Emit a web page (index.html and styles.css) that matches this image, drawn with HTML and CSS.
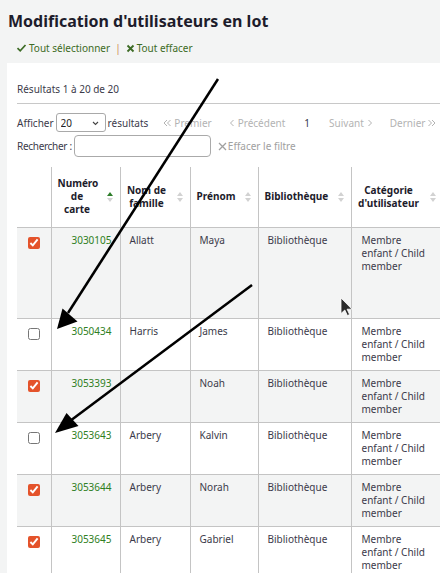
FILE: index.html
```html
<!DOCTYPE html>
<html lang="fr">
  <head>
    <meta charset="UTF-8" />
    <meta name="viewport" content="width=device-width, initial-scale=1.0" />
    <title>Modification d'utilisateurs en lot</title>
    <link rel="stylesheet" href="styles.css">
  </head>
  <body>
    <h1 class="page-title">Modification d'utilisateurs en lot</h1>

    <div class="toolbar">
      <a class="tool" href="#">
        <svg width="11" height="10" viewBox="0 0 11 10"><path d="M1.5 5.2 L4.2 7.8 L9.5 2" fill="none" stroke="currentColor" stroke-width="1.7"/></svg>
        Tout sélectionner
      </a>
      <span class="sep">|</span>
      <a class="tool" href="#">
        <svg width="9" height="10" viewBox="0 0 9 10"><path d="M1.5 2.5 L7.5 8.5 M7.5 2.5 L1.5 8.5" fill="none" stroke="currentColor" stroke-width="1.8"/></svg>
        Tout effacer
      </a>
    </div>

    <div class="panel">
      <p class="info">Résultats 1 à 20 de 20</p>

      <div class="controls">
        <div class="ctrl-row">
          <label class="length">
            Afficher
            <span class="select-wrap">
              <select>
                <option>20</option>
                <option>50</option>
                <option>100</option>
              </select>
              <svg class="chev" width="7" height="5" viewBox="0 0 7 5"><path d="M1 1 L3.5 3.5 L6 1" fill="none" stroke="#444" stroke-width="1.1"/></svg>
            </span>
            résultats
          </label>
          <div class="pager">
            <span class="page off">
              <svg width="8" height="8" viewBox="0 0 8 8"><path d="M4 1 L1 4 L4 7 M7.5 1 L4.5 4 L7.5 7" fill="none" stroke="currentColor" stroke-width="1"/></svg>Premier
            </span>
            <span class="page off">
              <svg width="6" height="8" viewBox="0 0 6 8"><path d="M4.5 1 L1.5 4 L4.5 7" fill="none" stroke="currentColor" stroke-width="1"/></svg>
              Précédent
            </span>
            <span class="page current">1</span>
            <span class="page off">
              Suivant
              <svg width="6" height="8" viewBox="0 0 6 8"><path d="M1.5 1 L4.5 4 L1.5 7" fill="none" stroke="currentColor" stroke-width="1"/></svg>
            </span>
            <span class="page off">
              Dernier
              <svg width="8" height="8" viewBox="0 0 8 8"><path d="M0.5 1 L3.5 4 L0.5 7 M4 1 L7 4 L4 7" fill="none" stroke="currentColor" stroke-width="1"/></svg>
            </span>
          </div>
        </div>
        <div class="ctrl-row">
          <label class="filter">
            Rechercher :
            <input type="search" class="search" />
          </label>
          <a class="clear" href="#">
            <svg width="9" height="9" viewBox="0 0 9 9"><path d="M1 1 L8 8 M8 1 L1 8" fill="none" stroke="currentColor" stroke-width="1.3"/></svg>Effacer le filtre
          </a>
        </div>
      </div>

      <table class="patrons">
        <colgroup>
          <col class="c-check" />
          <col class="c-num" />
          <col class="c-name" />
          <col class="c-first" />
          <col class="c-lib" />
          <col class="c-cat" />
          <col class="c-city" />
          <col class="c-exp" />
        </colgroup>
        <thead>
          <tr>
            <th class="nosort"></th>
            <th>Numéro de carte<span class="sort asc"></span></th>
            <th>Nom de famille<span class="sort"></span></th>
            <th>Prénom<span class="sort"></span></th>
            <th>Bibliothèque<span class="sort"></span></th>
            <th>Catégorie d'utilisateur<span class="sort"></span></th>
            <th>Ville<span class="sort"></span></th>
            <th>Date d'expiration<span class="sort"></span></th>
          </tr>
        </thead>
        <tbody>
          <tr class="odd tall">
            <td class="check"><input type="checkbox" checked /></td>
            <td class="num"><a href="#">3030105</a></td>
            <td>Allatt</td>
            <td>Maya</td>
            <td>Bibliothèque</td>
            <td class="cat">Membre enfant / Child member</td>
            <td></td>
            <td>31/12/2099</td>
          </tr>
          <tr>
            <td class="check"><input type="checkbox" /></td>
            <td class="num"><a href="#">3050434</a></td>
            <td>Harris</td>
            <td>James</td>
            <td>Bibliothèque</td>
            <td class="cat">Membre enfant / Child member</td>
            <td></td>
            <td>31/12/2099</td>
          </tr>
          <tr class="odd">
            <td class="check"><input type="checkbox" checked /></td>
            <td class="num"><a href="#">3053393</a></td>
            <td></td>
            <td>Noah</td>
            <td>Bibliothèque</td>
            <td class="cat">Membre enfant / Child member</td>
            <td></td>
            <td>31/12/2099</td>
          </tr>
          <tr>
            <td class="check"><input type="checkbox" /></td>
            <td class="num"><a href="#">3053643</a></td>
            <td>Arbery</td>
            <td>Kalvin</td>
            <td>Bibliothèque</td>
            <td class="cat">Membre enfant / Child member</td>
            <td></td>
            <td>31/12/2099</td>
          </tr>
          <tr class="odd">
            <td class="check"><input type="checkbox" checked /></td>
            <td class="num"><a href="#">3053644</a></td>
            <td>Arbery</td>
            <td>Norah</td>
            <td>Bibliothèque</td>
            <td class="cat">Membre enfant / Child member</td>
            <td></td>
            <td>31/12/2099</td>
          </tr>
          <tr>
            <td class="check"><input type="checkbox" checked /></td>
            <td class="num"><a href="#">3053645</a></td>
            <td>Arbery</td>
            <td>Gabriel</td>
            <td>Bibliothèque</td>
            <td class="cat">Membre enfant / Child member</td>
            <td></td>
            <td>31/12/2099</td>
          </tr>
          <tr class="odd">
            <td class="check"><input type="checkbox" checked /></td>
            <td class="num"><a href="#">3053646</a></td>
            <td>Arbery</td>
            <td>Lily</td>
            <td>Bibliothèque</td>
            <td class="cat">Membre enfant / Child member</td>
            <td></td>
            <td>31/12/2099</td>
          </tr>
        </tbody>
      </table>
    </div>

    <!-- annotation arrows and mouse pointer drawn over the screenshot -->
    <svg class="annotations" width="440" height="573" viewBox="0 0 440 573">
      <line x1="218" y1="79" x2="68" y2="313" stroke="#000" stroke-width="2.5" />
      <polygon points="57,329 62.5,308.5 77.5,321.5" fill="#000" />
      <line x1="252" y1="285" x2="70" y2="421" stroke="#000" stroke-width="2.5" />
      <polygon points="55,433 66.5,413 78.5,426" fill="#000" />
      <path transform="translate(341 298)" d="M0 0 V15.5 L3.8 12 L6.4 17.5 L8.6 16.6 L6.1 11.2 H11 Z" fill="#2b2b2b" stroke="#fff" stroke-width="0.8" />
    </svg>
  </body>
</html>
```

FILE: styles.css
```css
html,
body {
  overflow: hidden;
}
body {
  margin: 0;
  background-color: #f3f4f4;
  font-family: "Noto Sans", "DejaVu Sans", sans-serif;
  font-size: 10px;
  color: #3b3a4a;
}
a {
  text-decoration: none;
}
.page-title {
  margin: 0;
  padding: 10px 8px 0;
  font-size: 16px;
  line-height: 22px;
  font-weight: bold;
  color: #1d1c2b;
  white-space: nowrap;
}
.toolbar {
  display: flex;
  align-items: center;
  gap: 5px;
  margin-top: 9px;
  padding-left: 16px;
  line-height: 14px;
}
.tool {
  display: flex;
  align-items: center;
  gap: 2px;
  color: #3d6b25;
}
.sep {
  color: #cf8c55;
}
.panel {
  margin: 8px 0 0 7px;
  padding: 0 0 0 10px;
  width: 760px;
  background-color: #fff;
}
.info {
  margin: 0;
  padding: 19px 0 7px;
  line-height: 14px;
  border-bottom: 1px solid #c8c8c8;
}
.controls {
  display: grid;
  gap: 3px;
  padding-top: 9px;
}
.ctrl-row {
  display: flex;
  align-items: center;
  white-space: nowrap;
}
.length,
.filter {
  display: flex;
  align-items: center;
  gap: 2px;
}
.filter {
  letter-spacing: -0.3px;
}
.select-wrap {
  position: relative;
  display: inline-block;
}
.select-wrap select {
  appearance: none;
  width: 50px;
  height: 19px;
  padding: 0 0 0 4px;
  border: 1px solid #a9a9a9;
  border-radius: 3px;
  background: #fff;
  font-family: inherit;
  font-size: 10px;
  color: #222;
}
.select-wrap .chev {
  position: absolute;
  right: 7px;
  top: 8px;
  pointer-events: none;
}
.pager {
  display: flex;
  align-items: center;
  gap: 17px;
  margin-left: 15px;
}
.page {
  display: flex;
  align-items: center;
  gap: 3px;
}
.page.off {
  color: #b3b3b3;
}
.page.current {
  color: #34374a;
  padding: 0 2px;
}
.search {
  width: 137px;
  height: 22px;
  box-sizing: border-box;
  border: 1px solid #aaa;
  border-radius: 4px;
  margin: 0;
}
.clear {
  display: flex;
  align-items: center;
  gap: 1px;
  margin-left: 7px;
  color: #a0a0a0;
}
.patrons {
  margin-top: 10px;
  border-collapse: collapse;
  table-layout: fixed;
  width: 600px;
  line-height: 13px;
}
.c-check { width: 34px; }
.c-num { width: 69px; }
.c-name { width: 70px; }
.c-first { width: 68px; }
.c-lib { width: 93px; }
.c-cat { width: 92px; }
.c-city { width: 80px; }
.c-exp { width: 94px; }
.patrons th {
  position: relative;
  padding: 10px 23px 11px 6px;
  text-align: center;
  vertical-align: middle;
  font-weight: bold;
  color: #1d1c2b;
  border-left: 1px solid #c4c4c4;
  border-bottom: 1px solid #c4c4c4;
}
.patrons th.nosort,
.patrons td.check {
  border-left: none;
}
.sort {
  position: absolute;
  right: 7px;
  top: 50%;
  margin-top: -5px;
  width: 6px;
  height: 10px;
}
.sort::before,
.sort::after {
  content: "";
  position: absolute;
  left: 0;
  border-left: 3px solid transparent;
  border-right: 3px solid transparent;
}
.sort::before {
  top: 0;
  border-bottom: 4px solid #d2d2d2;
}
.sort::after {
  bottom: 0;
  border-top: 4px solid #d2d2d2;
}
.sort.asc::before {
  border-bottom-color: #2d7d2a;
}
.patrons td {
  padding: 6px 8px 6px 9px;
  vertical-align: top;
  border-left: 1px solid #c4c4c4;
  border-bottom: 1px solid #c4c4c4;
}
.patrons td.cat {
  padding-left: 10px;
  padding-right: 13px;
}
.patrons tr.odd td {
  background-color: #f3f4f4;
}
.patrons tr.tall {
  height: 91px;
}
.patrons td.check {
  padding: 7px 0 0;
  text-align: center;
}
.check input {
  margin: 2px 0 0;
  width: 12px;
  height: 12px;
  accent-color: #e4532b;
}
.patrons td.num {
  text-align: right;
  padding-right: 8px;
}
.num a {
  color: #2f7f23;
}
.annotations {
  position: fixed;
  top: 0;
  left: 0;
  pointer-events: none;
}
```
